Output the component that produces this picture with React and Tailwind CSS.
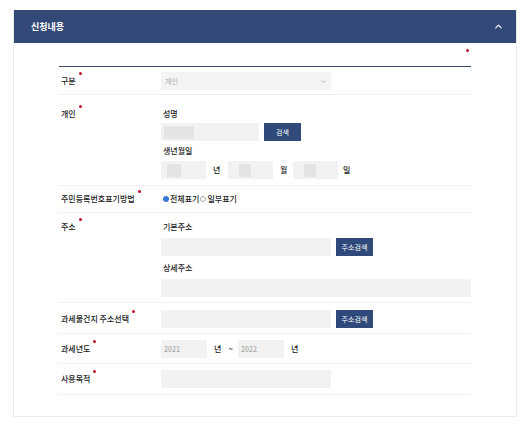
import { ChevronUp, ChevronDown } from "lucide-react";

const font = { fontFamily: '"Noto Sans CJK KR", "Noto Sans", sans-serif' };

function Req({ children }) {
  return (
    <span className="relative">
      {children}
      <span className="absolute -right-[6px] -top-[3px] w-[3px] h-[3px] rounded-full bg-[#c0142e]" />
    </span>
  );
}

function Row({ label, children, className = "" }) {
  return (
    <div className={`flex border-b border-[#f0f0f0] ${className}`}>
      <div className="w-[102px] shrink-0 pl-[2px] text-[8px] font-medium text-[#222] leading-[14px]">
        <Req>{label}</Req>
      </div>
      <div className="flex-1">{children}</div>
    </div>
  );
}

function Input({ className = "", masked, children }) {
  return (
    <div className={`h-[18px] bg-[#f2f2f2] flex items-center px-[3px] text-[7px] text-[#aaa] ${className}`}>
      {masked && <div className={`h-[13px] bg-[#e4e4e4] ${masked}`} />}
      {children}
    </div>
  );
}

function Btn({ children, className = "" }) {
  return (
    <div className={`h-[18px] bg-[#2f4a7a] text-white text-[7px] flex items-center justify-center ${className}`}>
      {children}
    </div>
  );
}

function Sub({ children, className = "" }) {
  return <div className={`text-[8px] font-medium text-[#222] leading-[14px] pl-[2px] ${className}`}>{children}</div>;
}

export default function App() {
  return (
    <div className="w-[528px] h-[427px] bg-white pt-[10px]" style={font}>
      <div className="ml-[13px] w-[504px] h-[407px] border border-[#ececec] border-t-0">
        {/* header */}
        <div className="h-[33px] bg-[#334a78] flex items-center justify-between pl-[17px] pr-[12px]">
          <span className="text-white text-[9px] font-bold">신청내용</span>
          <ChevronUp className="w-[11px] h-[11px] text-white" strokeWidth={2.5} />
        </div>

        <div className="px-[45px]">
          <div className="h-[23px] relative">
            <span className="absolute right-[2px] top-[6px] w-[3px] h-[3px] rounded-full bg-[#c0142e]" />
          </div>
          <div className="h-[1px] bg-[#3b4a64]" />

          {/* 구분 */}
          <Row label="구분" className="pt-[5px] pb-[4px] items-center">
            <div className="w-[170px] h-[18px] bg-[#f4f4f4] flex items-center justify-between px-[4px] text-[7px] text-[#aaa]">
              <span>개인</span>
              <ChevronDown className="w-[7px] h-[7px] text-[#888]" />
            </div>
          </Row>

          {/* 개인 */}
          <Row label="개인" className="pt-[12px] pb-[6px]">
            <Sub>성명</Sub>
            <div className="flex gap-[5px] mt-[2px]">
              <Input className="w-[98px]" masked="w-[30px]" />
              <Btn className="w-[37px]">검색</Btn>
            </div>
            <Sub className="mt-[3px]">생년월일</Sub>
            <div className="flex items-center mt-[3px] text-[8px] font-medium text-[#222]">
              <Input className="w-[45px]" masked="w-[14px] ml-[3px]" />
              <span className="ml-[7px] w-[15px]">년</span>
              <Input className="w-[45px]" masked="w-[12px] ml-[8px]" />
              <span className="ml-[7px] w-[13px]">월</span>
              <Input className="w-[45px]" masked="w-[12px] ml-[8px]" />
              <span className="ml-[5px]">일</span>
            </div>
          </Row>

          {/* 주민등록번호표기방법 */}
          <Row label="주민등록번호표기방법" className="pt-[6px] pb-[6px]">
            <div className="flex items-center text-[8px] font-medium text-[#222] leading-[14px] pl-[2px]">
              <span className="w-[6px] h-[6px] rounded-full bg-[#3a7be0] border border-[#2f6ac4] mr-[1px]" />
              <span>전체표기</span>
              <span className="w-[6px] h-[6px] rounded-full border border-[#aaa] mx-[1px]" />
              <span>일부표기</span>
            </div>
          </Row>

          {/* 주소 */}
          <Row label="주소" className="pt-[7px] pb-[5px]">
            <Sub>기본주소</Sub>
            <div className="flex gap-[5px] mt-[4px]">
              <Input className="w-[170px]" />
              <Btn className="w-[37px]">주소검색</Btn>
            </div>
            <Sub className="mt-[5px]">상세주소</Sub>
            <Input className="w-full mt-[4px]" />
          </Row>

          {/* 과세물건지 주소선택 */}
          <Row label="과세물건지 주소선택" className="pt-[7px] pb-[5px] items-center">
            <div className="flex gap-[5px]">
              <Input className="w-[170px]" />
              <Btn className="w-[37px]">주소검색</Btn>
            </div>
          </Row>

          {/* 과세년도 */}
          <Row label="과세년도" className="pt-[6px] pb-[5px] items-center">
            <div className="flex items-center text-[8px] font-medium text-[#222]">
              <Input className="w-[46px]">2021</Input>
              <span className="ml-[7px]">년</span>
              <span className="ml-[7px]">~</span>
              <Input className="w-[46px] ml-[5px]">2022</Input>
              <span className="ml-[7px]">년</span>
            </div>
          </Row>

          {/* 사용목적 */}
          <Row label="사용목적" className="pt-[6px] pb-[6px] items-center">
            <Input className="w-[170px]" />
          </Row>
        </div>
      </div>
    </div>
  );
}
